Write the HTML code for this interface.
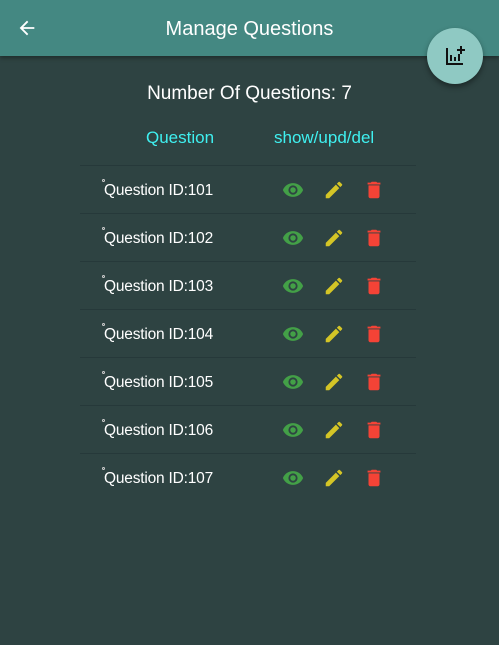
<!DOCTYPE html>
<html><head><meta charset="utf-8"><style>
*{margin:0;padding:0;box-sizing:border-box}
body{width:499px;height:645px;background:#2e4342;font-family:"Liberation Sans",sans-serif;position:relative;overflow:hidden;color:#fff}
.hdr{position:absolute;left:0;top:0;width:499px;height:56px;background:#448882;box-shadow:0 2px 4px rgba(0,0,0,.35)}
.hdr .t{position:absolute;left:0;width:499px;top:18px;text-align:center;font-size:20px;color:#fff}
.back{position:absolute;left:16px;top:17px}
.fab{position:absolute;left:427px;top:28px;width:56px;height:56px;border-radius:50%;background:#8fc9c3;box-shadow:0 3px 6px rgba(0,0,0,.4)}
.fab svg{position:absolute;left:16px;top:16px}
.num{position:absolute;top:83px;left:0;width:499px;text-align:center;font-size:19px}
.col{position:absolute;top:128px;font-size:17px;color:#3ff0f0}
.row{position:absolute;left:80px;width:336px;height:48px;border-top:1px solid #26393a}
.row .q{position:absolute;left:24px;top:16px;font-size:15.5px;letter-spacing:-0.2px}
.row .d{position:absolute;left:22px;top:13px;width:3px;height:3px;border:1px solid #ccc;border-radius:50%}
.row svg{position:absolute;top:13px}
</style></head><body>
<div class="hdr">
<svg class="back" width="22" height="22" viewBox="0 0 24 24"><path d="M20 11H7.83l5.59-5.59L12 4l-8 8 8 8 1.41-1.41L7.83 13H20v-2z" fill="#fff"/></svg>
<div class="t">Manage Questions</div>
</div>
<div class="fab"><svg width="24" height="24" viewBox="0 0 24 24"><path d="M3 4h2v15h15v2H3z M7 11h2v6H7z M11 13h2v4h-2z M15 10h2v7h-2z M17 2h2v3h3v2h-3v3h-2V7h-3V5h3z" fill="#111"/></svg></div>
<div class="num">Number Of Questions: 7</div>
<div class="col" style="left:146px">Question</div>
<div class="col" style="left:274px">show/upd/del</div>
<div id="rows"></div>
<script>
var h='';for(var i=0;i<7;i++){var y=165+i*48;h+='<div class="row" style="top:'+y+'px"><div class="d"></div><div class="q">Question ID:10'+(i+1)+'</div>'+
'<svg style="left:202px" width="22" height="22" viewBox="0 0 24 24"><path d="M12 4.5C7 4.5 2.73 7.61 1 12c1.73 4.39 6 7.5 11 7.5s9.27-3.11 11-7.5c-1.73-4.39-6-7.5-11-7.5zM12 17a5 5 0 110-10 5 5 0 010 10zm0-8a3 3 0 100 6 3 3 0 000-6z" fill="#43a047"/></svg>'+
'<svg style="left:243px" width="22" height="22" viewBox="0 0 24 24"><path d="M3 17.25V21h3.75L17.81 9.94l-3.75-3.75L3 17.25zM20.71 7.04a1 1 0 000-1.41l-2.34-2.34a1 1 0 00-1.41 0l-1.83 1.83 3.75 3.75 1.83-1.83z" fill="#d4c526"/></svg>'+
'<svg style="left:283px" width="22" height="22" viewBox="0 0 24 24"><path d="M6 19c0 1.1.9 2 2 2h8c1.1 0 2-.9 2-2V7H6v12zM19 4h-3.5l-1-1h-5l-1 1H5v2h14V4z" fill="#f44336"/></svg></div>';}
document.getElementById('rows').innerHTML=h;
</script>
</body></html>
